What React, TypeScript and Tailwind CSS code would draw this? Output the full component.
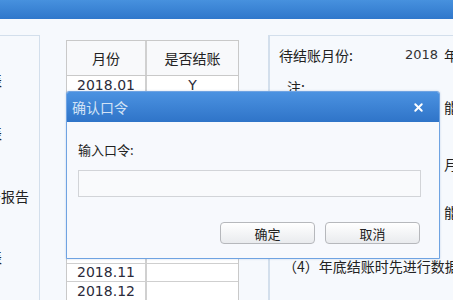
import { X } from 'lucide-react'

const months = ['2018.01', '2018.02', '2018.03', '2018.04', '2018.05', '2018.06', '2018.07', '2018.08', '2018.09', '2018.10', '2018.11', '2018.12']

const cjk = "font-['Noto_Sans_CJK_SC',sans-serif]"

export default function App() {
  return (
    <div className={`relative w-[453px] h-[300px] overflow-hidden bg-[#f6f9fd] text-[#222] ${cjk}`}>
      {/* 顶部蓝条 */}
      <div className="h-[19px] bg-gradient-to-b from-[#4791de] to-[#2f77cb]" />

      <div className="flex items-start">
        {/* 左侧菜单 */}
        <div className="shrink-0 mt-[16px] w-[40px] h-[300px] border-t border-r border-[#d3dfec] overflow-hidden text-[14px] leading-none">
          <div className="ml-[-12px] mt-[37px] whitespace-nowrap">表</div>
          <div className="ml-[-12px] mt-[39px] whitespace-nowrap">表</div>
          <div className="ml-[-13px] mt-[49px] whitespace-nowrap">务报告</div>
          <div className="ml-[-12px] mt-[47px] whitespace-nowrap">表</div>
        </div>

        {/* 结账月份表 */}
        <div className="shrink-0 ml-[26px] mt-[21px] w-[173px] border border-[#c9c9c9] bg-white">
          <div className="flex h-[35px] border-b border-[#c9c9c9] bg-[#f8f9fb] text-[14px]">
            <div className="w-[80px] border-r-2 border-[#d0d0d0] flex items-center justify-center">月份</div>
            <div className="flex-1 flex items-center justify-center">是否结账</div>
          </div>
          {months.map((m, i) => (
            <div key={m} className="flex h-[18.75px] border-b border-[#cfcfcf] text-[14px] leading-none">
              <div className="w-[80px] border-r-2 border-[#d0d0d0] flex items-center justify-center font-['DejaVu_Sans',sans-serif] text-[#2b2b3b]">{m}</div>
              <div className="flex-1 flex items-center justify-center font-['DejaVu_Sans',sans-serif] text-[#2b2b3b]">{i === 0 ? 'Y' : ''}</div>
            </div>
          ))}
        </div>

        {/* 右侧说明 */}
        <div className="shrink-0 ml-[29px] mt-[16px] w-[200px] h-[300px] border-t border-l-2 border-[#d3dfec] pl-[9px] pt-[9px] text-[14px] whitespace-nowrap">
          <div className="flex items-center h-[20px]">
            <span>待结账月份:</span>
            <span className="ml-[52px] text-[13px] font-['DejaVu_Sans',sans-serif] text-[#333]">2018</span>
            <span className="ml-[6px]">年</span>
          </div>
          <div className="ml-[8px] mt-[12px] h-[20px]">注:</div>
          <div className="ml-[165px] mt-[0px] h-[20px]">能</div>
          <div className="ml-[165px] mt-[37px] h-[20px]">月</div>
          <div className="ml-[165px] mt-[28px] h-[20px]">能</div>
          <div className="ml-[4px] mt-[34px] h-[20px]">（4）年底结账时先进行数据备份</div>
        </div>
      </div>

      {/* 确认口令对话框 */}
      <div className="absolute left-[66px] top-[91px] w-[374px] h-[168px] border border-[#6fa3e2] rounded-t-[3px] bg-[#f7f9fd] shadow-[0_0_2px_rgba(60,110,180,0.3)]">
        <div className="h-[30px] bg-gradient-to-b from-[#4b92e1] to-[#2f74c8] flex items-center justify-between pl-[5px] pr-[14px] rounded-t-[2px]">
          <span className="text-[14px] text-[#d2e2f5]">确认口令</span>
          <X className="w-[13px] h-[13px] text-white" strokeWidth={3.5} />
        </div>
        <div className="px-[11px]">
          <div className="mt-[21px] text-[13px] leading-none text-[#222]">输入口令:</div>
          <div className="mt-[14px] h-[27px] w-[343px] border border-[#d2d4d8] bg-[#f9fafc]" />
          <div className="mt-[25px] flex justify-end gap-[10px] pr-[8px]">
            <button className="w-[95px] h-[22px] rounded-[4px] border border-[#b6b8bc] bg-gradient-to-b from-white to-[#e9ebee] text-[13px] leading-none text-[#222]">确定</button>
            <button className="w-[95px] h-[22px] rounded-[4px] border border-[#b6b8bc] bg-gradient-to-b from-white to-[#e9ebee] text-[13px] leading-none text-[#222]">取消</button>
          </div>
        </div>
      </div>
    </div>
  )
}
